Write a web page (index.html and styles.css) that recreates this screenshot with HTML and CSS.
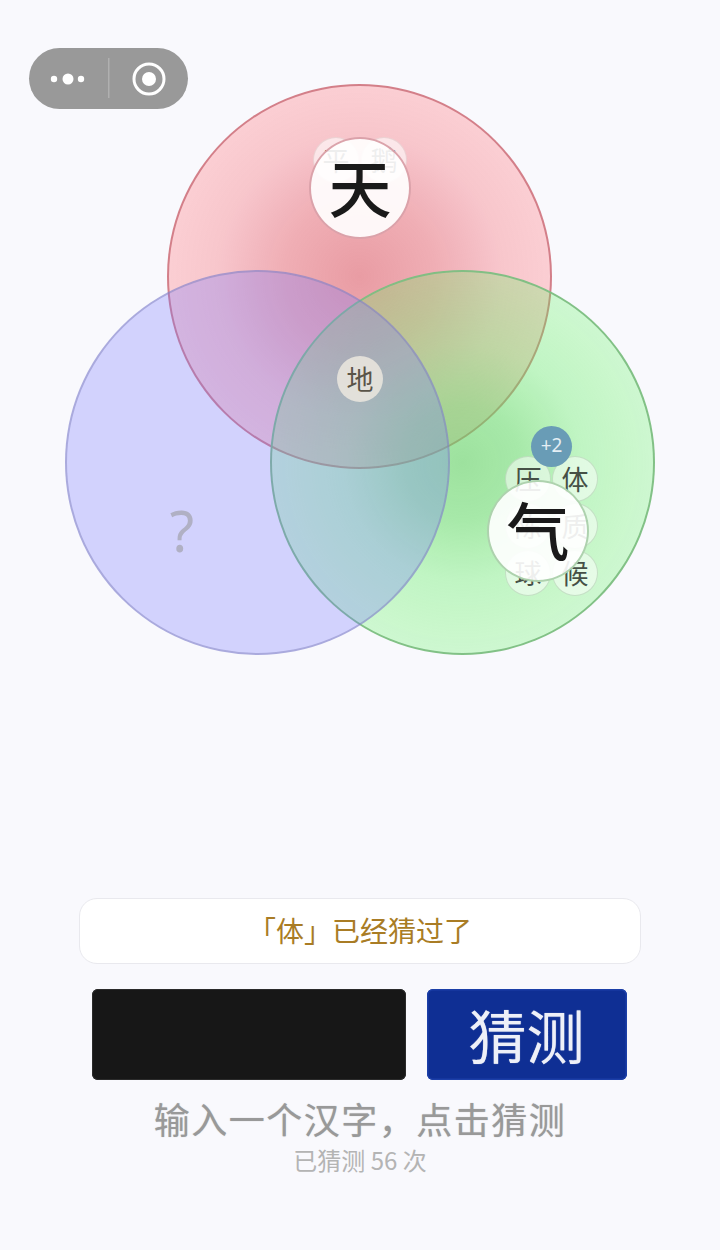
FILE: index.html
```html
<!DOCTYPE html>
<html lang="zh-CN">
<head>
<meta charset="utf-8">
<title>猜字</title>
<link rel="stylesheet" href="styles.css">
</head>
<body>
<div class="capsule">
  <svg width="159" height="61" viewBox="0 0 159 61">
    <circle cx="25" cy="31" r="3.200" fill="#fff"/>
    <circle cx="39" cy="31" r="5.500" fill="#fff"/>
    <circle cx="52" cy="31" r="3.200" fill="#fff"/>
    <rect x="79" y="10" width="1.500" height="40" fill="#b0b0b0"/>
    <circle cx="120" cy="31" r="15" fill="none" stroke="#fff" stroke-width="3"/>
    <circle cx="120" cy="31" r="7" fill="#fff"/>
  </svg>
</div>
<main class="page">
  <section class="venn">
    <div class="set set-red"></div>
    <div class="set set-green"></div>
    <div class="set set-blue"></div>
    <span class="unknown">?</span>

    <span class="node faint n-ping">平</span>
    <span class="node faint n-e">鹅</span>
    <span class="node main-node n-tian">天</span>

    <span class="node n-di">地</span>

    <span class="node n-ya">压</span>
    <span class="node n-ti">体</span>
    <span class="node n-chen">陈</span>
    <span class="node n-zhi">质</span>
    <span class="node n-qiu">球</span>
    <span class="node n-hou">候</span>
    <span class="badge">+2</span>
    <span class="node main-node n-qi">气</span>
  </section>
  <section class="controls">
    <div class="toast">「体」已经猜过了</div>
    <div class="input-row">
      <div class="char-input"></div>
      <button class="guess-btn">猜测</button>
    </div>
    <p class="hint">输入一个汉字，点击猜测</p>
    <p class="count">已猜测 56 次</p>
  </section>
</main>
</body>
</html>
```
FILE: styles.css
```css
* { box-sizing: border-box; }
html, body { margin: 0; padding: 0; }
body {
  width: 720px;
  height: 1250px;
  background: #f9f9fd;
  font-family: "Noto Sans CJK SC", "Noto Sans", sans-serif;
  overflow: hidden;
  position: relative;
}
.capsule {
  position: absolute;
  left: 29px;
  top: 48px;
  width: 159px;
  height: 61px;
  border-radius: 31px;
  background: #999;
}
.capsule svg { display: block; }
.page { display: flex; flex-direction: column; }
.venn { position: relative; height: 898px; flex: none; }
.set {
  position: absolute;
  width: 385px;
  height: 385px;
  border-radius: 50%;
  border: 2px solid;
}
.set-red {
  left: 167px;
  top: 84px;
  border-color: rgba(200, 105, 115, .78);
  background: radial-gradient(circle closest-side, rgba(220, 80, 90, .55) 0%, rgba(228, 85, 95, .46) 40%, rgba(245, 95, 105, .33) 75%, rgba(255, 100, 110, .29) 100%);
}
.set-green {
  left: 270px;
  top: 269.500px;
  border-color: rgba(125, 190, 130, .95);
  background: radial-gradient(circle closest-side, rgba(100, 210, 100, .62) 0%, rgba(100, 220, 100, .55) 30%, rgba(95, 238, 95, .37) 62%, rgba(90, 245, 90, .27) 100%);
}
.set-blue {
  left: 65px;
  top: 269.500px;
  border-color: rgba(130, 130, 190, .5);
  background: rgba(120, 120, 255, .3);
}
.unknown {
  position: absolute;
  left: 162px;
  top: 490px;
  width: 40px;
  text-align: center;
  font-size: 56px;
  line-height: 80px;
  color: #b0b0c4;
  font-family: "Noto Sans", sans-serif;
}
.node {
  position: absolute;
  width: 46px;
  height: 46px;
  margin: -23px 0 0 -23px;
  border-radius: 50%;
  background: rgba(255, 255, 255, .52);
  color: #465046;
  font-size: 27px;
  line-height: 44px;
  text-align: center;
  border: 1px solid rgba(175, 205, 175, .6);
}
.main-node {
  width: 102px;
  height: 102px;
  margin: -51px 0 0 -51px;
  background: rgba(255, 255, 255, .91);
  color: #1a1a1a;
  font-size: 63px;
  font-weight: 500;
  line-height: 92px;
  border-width: 2px;
}
.faint { border-color: rgba(220, 190, 190, .5); background: rgba(255, 255, 255, .6); color: #4a4a4a; }
.n-ping { left: 336px; top: 160px; }
.n-e { left: 384px; top: 160px; }
.n-tian { left: 360px; top: 188px; border-color: rgba(210, 140, 150, .8); color: #1a1a1a; }
.n-di { left: 360px; top: 379px; border-color: transparent; background: rgba(240, 235, 225, .8); color: #5a5448; }
.n-ya { left: 528px; top: 479px; }
.n-ti { left: 575px; top: 479px; }
.n-chen { left: 528px; top: 526px; }
.n-zhi { left: 575px; top: 526px; }
.n-qiu { left: 528px; top: 573px; }
.n-hou { left: 575px; top: 573px; }
.n-qi { left: 538px; top: 531px; border-color: rgba(165, 205, 165, .9); color: #1a1a1a; }
.badge {
  position: absolute;
  left: 531px;
  top: 426px;
  width: 41px;
  height: 41px;
  border-radius: 50%;
  background: #699cb6;
  color: #e4eef4;
  font-size: 19px;
  line-height: 39px;
  text-align: center;
  font-family: "Noto Sans", sans-serif;
}
.controls {
  display: flex;
  flex-direction: column;
  align-items: center;
}
.toast {
  width: 562px;
  height: 66px;
  border-radius: 18px;
  background: #fff;
  border: 1px solid #e9e9ee;
  color: #a97c25;
  font-size: 28px;
  line-height: 62px;
  text-align: center;
}
.input-row {
  display: flex;
  gap: 21px;
  margin-top: 25px;
  width: 535px;
  transform: translateX(-1px);
}
.char-input {
  width: 314px;
  height: 91px;
  background: #171717;
  border-radius: 6px;
  box-shadow: inset 0 0 0 1px #2b2b2b;
}
.guess-btn {
  width: 200px;
  height: 91px;
  background: #0f2f94;
  border: 0;
  border-radius: 6px;
  box-shadow: inset 0 0 0 1.500px #1c3fa8;
  color: #eef0f8;
  font-family: inherit;
  font-size: 58px;
  line-height: 91px;
  padding: 0;
  text-shadow: 0 0 1px rgba(255, 255, 255, .7);
}
.hint {
  margin: 15px 0 0;
  color: #999;
  font-size: 36px;
  line-height: 46px;
  letter-spacing: 1.500px;
  text-align: center;
  text-shadow: 0 0 1px rgba(153, 153, 153, .7);
}
.count {
  margin: 1px 0 0;
  color: #b4b4b4;
  font-size: 24px;
  line-height: 36px;
  text-align: center;
}
```
